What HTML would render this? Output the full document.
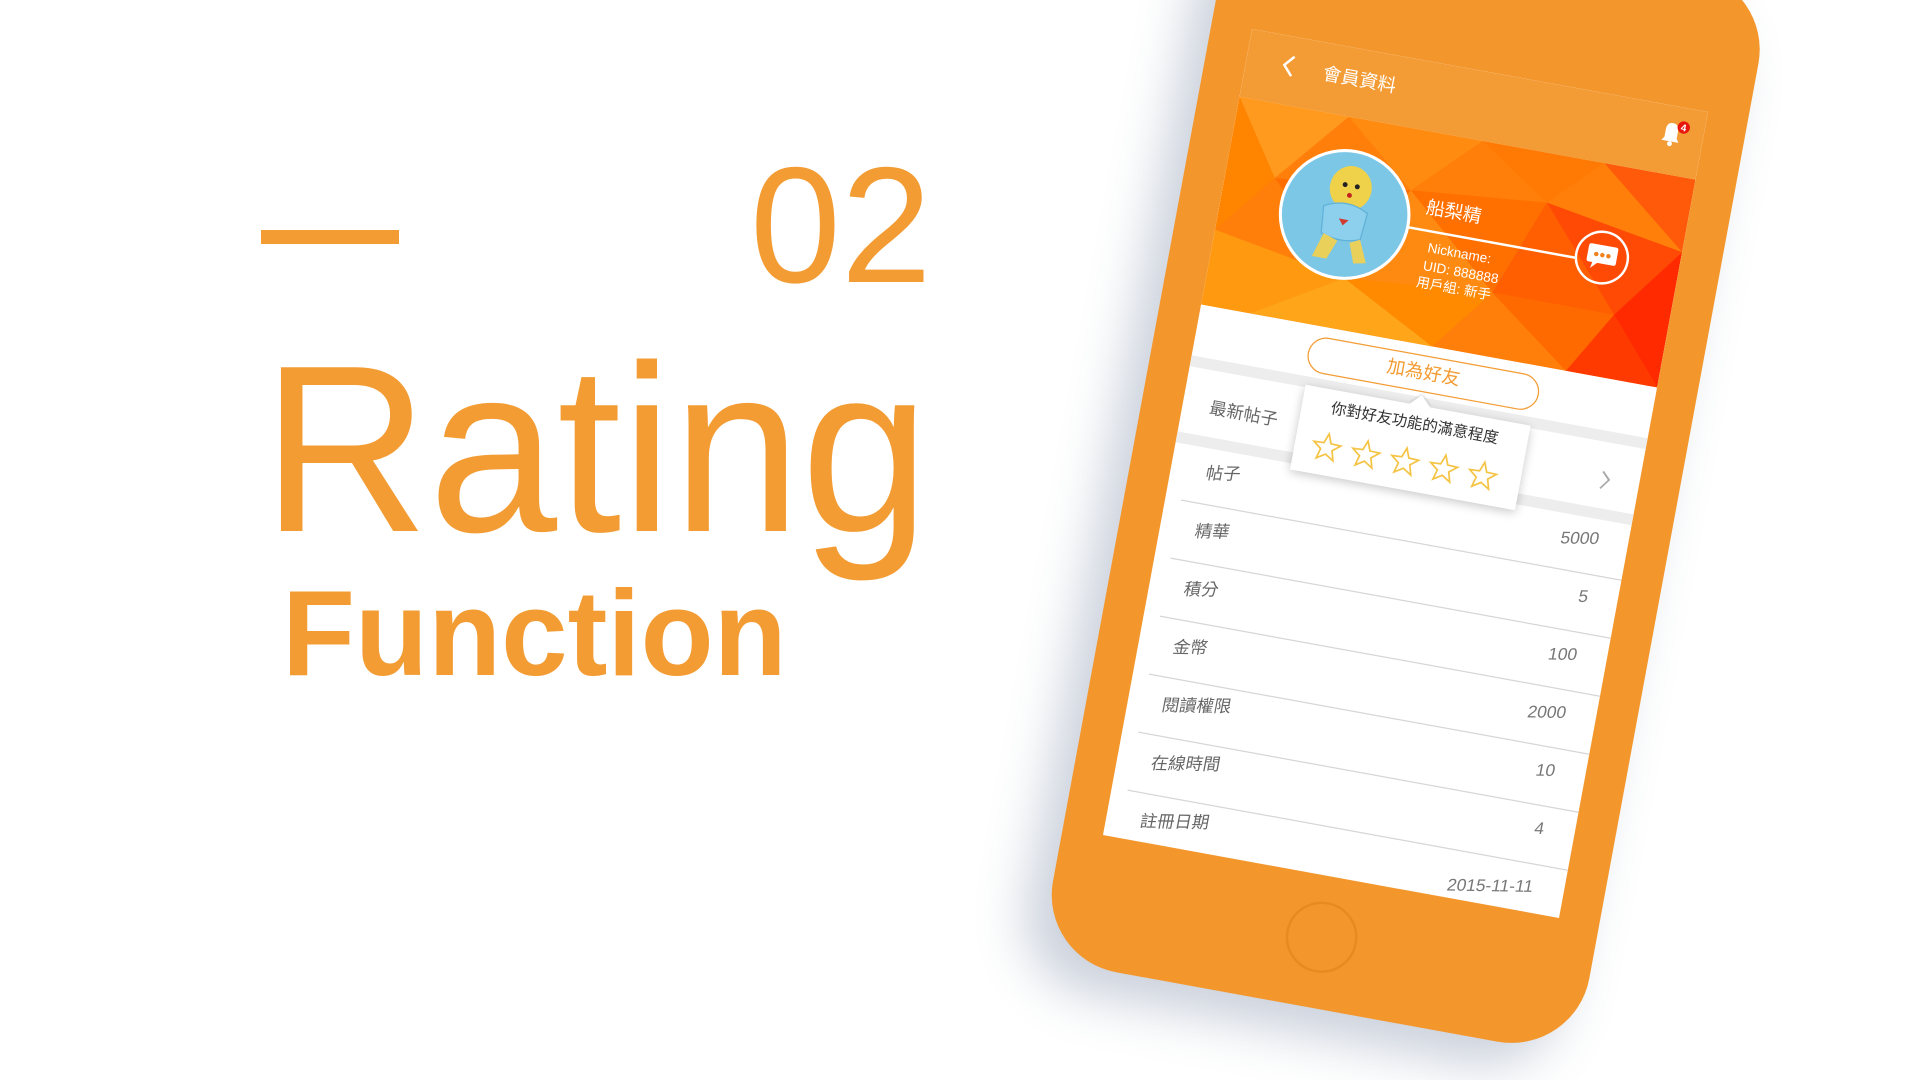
<!DOCTYPE html>
<html><head><meta charset="utf-8">
<style>
html,body{margin:0;padding:0;width:1920px;height:1080px;overflow:hidden;background:#fff;}
body{position:relative;font-family:"Liberation Sans","Noto Sans CJK TC",sans-serif;}
.abs{position:absolute;}
.big{position:absolute;color:#F39C33;font-family:"Liberation Sans",sans-serif;line-height:1;white-space:nowrap;transform-origin:0 0;}
.A{position:absolute;left:0;top:0;width:375px;height:667px;transform-origin:0 0;transform:matrix(1.216,0.2213,-0.2234,1.2084,1252,29);}
.B{position:absolute;left:0;top:0;width:460px;height:460px;transform-origin:0 0;transform:matrix(1.236,0.0216,-0.229,1.208,1137.4,442.7);}
.lbl{position:absolute;left:60px;font-size:14px;color:#666;line-height:20px;}
.val{position:absolute;right:73px;font-size:14px;color:#777;line-height:20px;text-align:right;}
.sep{position:absolute;left:13px;right:0;height:1px;background:#d6d6d6;}
</style></head><body>

<div class="abs" style="left:261px;top:230px;width:138px;height:14px;background:#F39C33"></div>
<div class="big" style="left:750px;top:143px;font-size:165px;transform:scaleX(0.99)">02</div>
<div class="big" style="left:262px;top:331px;font-size:238px;transform:scaleX(0.97)">Rating</div>
<div class="big" style="left:282px;top:572px;font-size:122px;font-weight:bold;transform:scaleX(0.98)">Function</div>

<div class="A">
  <div class="abs" style="left:-33px;top:-110px;width:441px;height:885px;border-radius:64px;background:#F3972D;box-shadow:-18px 22px 40px rgba(70,90,130,0.28);"></div>
  <div class="abs" style="left:160px;top:688px;width:58px;height:58px;border-radius:50%;border:2px solid #E68A22;box-sizing:border-box;"></div>
  <div class="abs" style="left:0;top:0;width:375px;height:667px;background:#fff;overflow:hidden;">
    <div class="abs" style="left:0;top:0;width:375px;height:56px;background:#F39C35;"></div>
    <svg class="abs" style="left:27px;top:14px" width="16" height="20"><path d="M11 2 L4 10 L11 18" stroke="#fff" stroke-width="2" fill="none"/></svg>
    <div class="abs" style="left:63px;top:17px;font-size:15px;color:#fff;line-height:18px;">會員資料</div>
    <svg class="abs" style="left:337px;top:10px" width="30" height="26"><path d="M5 19 L7 16 L7 10 Q7 4 12 4 Q17 4 17 10 L17 16 L19 19 Z" fill="#fff"/><circle cx="12" cy="21" r="2" fill="#fff"/><circle cx="21" cy="6" r="5" fill="#E8160C"/><text x="21" y="9" font-size="8" fill="#fff" text-anchor="middle" font-family="Liberation Sans" font-weight="bold">4</text></svg>
    <svg class="abs" style="left:0;top:56px" width="375" height="172">
      <rect width="375" height="172" fill="#FF7F0A"/>
      <polygon points="0,0 90,0 40,60" fill="#FF9A1F"/>
      <polygon points="90,0 200,0 150,50" fill="#FF8C10"/>
      <polygon points="200,0 300,0 260,40" fill="#FF7A05"/>
      <polygon points="300,0 375,0 375,60" fill="#FF5A0A"/>
      <polygon points="0,0 40,60 0,110" fill="#FF8500"/>
      <polygon points="40,60 150,50 110,130" fill="#FF6E00"/>
      <polygon points="150,50 260,40 230,120" fill="#FF7000"/>
      <polygon points="260,40 375,60 330,120" fill="#FF4A05"/>
      <polygon points="375,60 375,172 330,120" fill="#FF2A00"/>
      <polygon points="0,110 110,130 40,172 0,172" fill="#FF9A10"/>
      <polygon points="110,130 230,120 190,172" fill="#FF8A00"/>
      <polygon points="230,120 330,120 300,172" fill="#FF6A00"/>
      <polygon points="330,120 375,172 300,172" fill="#FF3A00"/>
      <polygon points="40,172 110,130 190,172" fill="#FFA51A"/>
      <polygon points="150,50 230,120 110,130" fill="#FF8A12"/>
      <polygon points="260,40 330,120 230,120" fill="#FF5F00"/>
    </svg>
    <svg class="abs" style="left:47px;top:81px" width="108" height="108">
      <circle cx="54" cy="54" r="52" fill="#7CC6E6" stroke="#fff" stroke-width="2.5"/>
      <ellipse cx="55" cy="32" rx="17" ry="18" fill="#EFD24A"/>
      <path d="M36 50 Q54 40 72 50 L70 72 Q54 78 38 72 Z" fill="#8CD0EE" stroke="#5fb0d8"/>
      <path d="M40 72 L34 92 L46 92 L52 76 Z M62 76 L68 92 L78 90 L70 72 Z" fill="#E9D05A"/>
      <circle cx="50" cy="30" r="2" fill="#222"/><circle cx="60" cy="30" r="2" fill="#222"/>
      <circle cx="55" cy="38" r="2" fill="#C2251F"/><path d="M50 58 L58 58 L54 63 Z" fill="#D23A2F"/>
    </svg>
    <div class="abs" style="left:165px;top:109px;font-size:15px;color:#fff;line-height:18px;">船梨精</div>
    <div class="abs" style="left:153px;top:135px;width:138px;height:2px;background:#fff;"></div>
    <div class="abs" style="left:290px;top:110px;width:44px;height:44px;border-radius:50%;border:2px solid #fff;box-sizing:border-box;"></div>
    <svg class="abs" style="left:299px;top:120px" width="26" height="24"><path d="M3 2 H23 Q25 2 25 4 V15 Q25 17 23 17 H10 L5 22 L6 17 H3 Q1 17 1 15 V4 Q1 2 3 2 Z" fill="#fff"/><circle cx="8" cy="10" r="1.8" fill="#F0801A"/><circle cx="13" cy="10" r="1.8" fill="#F0801A"/><circle cx="18" cy="10" r="1.8" fill="#F0801A"/></svg>
    <div class="abs" style="left:172px;top:143px;font-size:11px;color:#fff;line-height:14px;">Nickname:</div>
    <div class="abs" style="left:171px;top:158px;font-size:11px;color:#fff;line-height:14px;">UID: 888888</div>
    <div class="abs" style="left:168px;top:172px;font-size:11px;color:#fff;line-height:14px;">用戶組: 新手</div>
    <div class="abs" style="left:0;top:270px;width:375px;height:9px;background:#EDEDED;"></div>
    <div class="abs" style="left:22px;top:300px;font-size:14px;color:#666;line-height:18px;">最新帖子</div>
    <div class="abs" style="left:0;top:333px;width:375px;height:9px;background:#EDEDED;"></div>
    <div class="sep" style="top:387px"></div>
    <div class="sep" style="top:435px"></div>
    <div class="sep" style="top:483px"></div>
    <div class="sep" style="top:531px"></div>
    <div class="sep" style="top:579px"></div>
    <div class="sep" style="top:627px"></div>
  </div>
</div>

<div class="abs" style="left:0;top:0;width:1920px;height:1080px;clip-path:polygon(1252px 29px,1708px 112px,1559px 918px,1103px 835px);">
  <div class="B">
    <div class="lbl" style="top:14px">帖子</div>
    <svg class="abs" style="left:378px;top:15px" width="10" height="18"><path d="M2 2 L8 9 L2 16" stroke="#aaa" stroke-width="1.5" fill="none"/></svg>
    <div class="lbl" style="top:62px">精華</div><div class="val" style="top:62px">5000</div>
    <div class="lbl" style="top:110px">積分</div><div class="val" style="top:110px">5</div>
    <div class="lbl" style="top:158px">金幣</div><div class="val" style="top:158px">100</div>
    <div class="lbl" style="top:206px">閱讀權限</div><div class="val" style="top:206px">2000</div>
    <div class="lbl" style="top:254px">在線時間</div><div class="val" style="top:254px">10</div>
    <div class="lbl" style="top:302px">註冊日期</div><div class="val" style="top:302px">4</div>
    <div class="val" style="top:350px">2015-11-11</div>
  </div>
</div>

<div class="A" style="pointer-events:none">
  <div class="abs" style="left:92px;top:236px;width:190px;height:30px;border:1.5px solid #F39C33;border-radius:16px;box-sizing:border-box;background:#fff;color:#F39C33;font-size:15px;line-height:27px;text-align:center;">加為好友</div>
  <div class="abs" style="left:95px;top:277px;width:185px;height:70px;background:#fff;box-shadow:0 2px 8px rgba(0,0,0,0.22);"></div>
  <div class="abs" style="left:183px;top:271px;width:12px;height:12px;background:#fff;transform:rotate(45deg);box-shadow:-1px -1px 2px rgba(0,0,0,0.12);"></div>
  <div class="abs" style="left:95px;top:284px;width:185px;text-align:center;font-size:12.5px;color:#333;line-height:16px;">你對好友功能的滿意程度</div>
  <svg class="abs" style="left:105px;top:310px" width="170" height="28">
    <g fill="none" stroke="#F5C445" stroke-width="1.4">
      <polygon transform="translate(4,2)" points="12,1 14.9,8.6 23,9 16.7,14 18.9,22 12,17.6 5.1,22 7.3,14 1,9 9.1,8.6"/>
      <polygon transform="translate(36,2)" points="12,1 14.9,8.6 23,9 16.7,14 18.9,22 12,17.6 5.1,22 7.3,14 1,9 9.1,8.6"/>
      <polygon transform="translate(68,2)" points="12,1 14.9,8.6 23,9 16.7,14 18.9,22 12,17.6 5.1,22 7.3,14 1,9 9.1,8.6"/>
      <polygon transform="translate(100,2)" points="12,1 14.9,8.6 23,9 16.7,14 18.9,22 12,17.6 5.1,22 7.3,14 1,9 9.1,8.6"/>
      <polygon transform="translate(132,2)" points="12,1 14.9,8.6 23,9 16.7,14 18.9,22 12,17.6 5.1,22 7.3,14 1,9 9.1,8.6"/>
    </g>
  </svg>
</div>
</body></html>
